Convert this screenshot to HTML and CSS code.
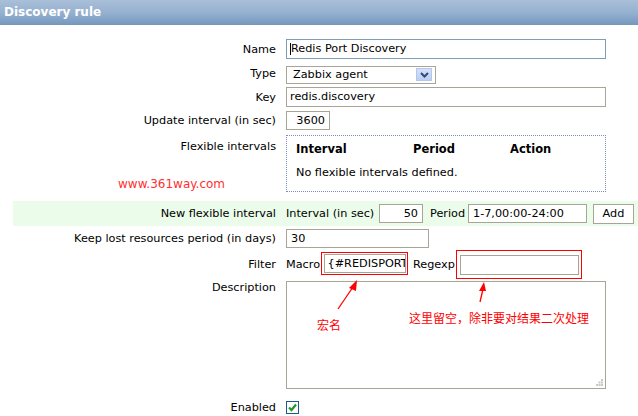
FILE: index.html
```html
<!DOCTYPE html>
<html>
<head>
<meta charset="utf-8">
<link rel="stylesheet" href="styles.css">
</head>
<body>
<div class="header">Discovery rule</div>
<div class="form">
  <div class="row r-name">
    <div class="lbl">Name</div>
    <div class="val"><div class="field f-name"><span class="caret"></span>Redis Port Discovery</div></div>
  </div>
  <div class="row r-type">
    <div class="lbl">Type</div>
    <div class="val"><div class="select"><span class="sel-text">Zabbix agent</span><span class="sel-btn"><svg width="9" height="6" viewBox="0 0 9 6"><path d="M1 1 L4.5 4.5 L8 1" fill="none" stroke="#2d4a7a" stroke-width="2"/></svg></span></div></div>
  </div>
  <div class="row r-key">
    <div class="lbl">Key</div>
    <div class="val"><div class="field f-key">redis.discovery</div></div>
  </div>
  <div class="row r-upd">
    <div class="lbl">Update interval (in sec)</div>
    <div class="val"><div class="field f-num f-upd">3600</div></div>
  </div>
  <div class="row r-flex">
    <div class="lbl lbl-top">Flexible intervals</div>
    <div class="val val-top">
      <div class="flexbox">
        <div class="flex-head"><span class="fh-int">Interval</span><span class="fh-per">Period</span><span class="fh-act">Action</span></div>
        <div class="flex-empty">No flexible intervals defined.</div>
      </div>
    </div>
  </div>
  <div class="row r-new">
    <div class="lbl">New flexible interval</div>
    <div class="val">
      <span class="nf-int">Interval (in sec)</span>
      <div class="field f-num f-nint">50</div>
      <span class="nf-per">Period</span>
      <div class="field f-per">1-7,00:00-24:00</div>
      <div class="btn">Add</div>
    </div>
  </div>
  <div class="row r-keep">
    <div class="lbl">Keep lost resources period (in days)</div>
    <div class="val"><div class="field f-keep">30</div></div>
  </div>
  <div class="row r-filter">
    <div class="lbl">Filter</div>
    <div class="val">
      <span class="fl-macro">Macro</span>
      <div class="redbox rb-macro"><div class="field f-macro">{#REDISPORT}</div></div>
      <span class="fl-regexp">Regexp</span>
      <div class="redbox rb-regexp"><div class="field f-regexp"></div></div>
    </div>
  </div>
  <div class="row r-desc">
    <div class="lbl lbl-desc">Description</div>
    <div class="val val-top"><div class="textarea"><svg class="grip" width="7" height="7" viewBox="0 0 7 7"><rect x="5" y="0" width="2" height="2" fill="#c8c8c8"/><rect x="5" y="2.5" width="2" height="2" fill="#c8c8c8"/><rect x="2.5" y="2.5" width="2" height="2" fill="#c8c8c8"/><rect x="5" y="5" width="2" height="2" fill="#c8c8c8"/><rect x="2.5" y="5" width="2" height="2" fill="#c8c8c8"/><rect x="0" y="5" width="2" height="2" fill="#c8c8c8"/></svg></div></div>
  </div>
  <div class="row r-enabled">
    <div class="lbl">Enabled</div>
    <div class="val"><div class="checkbox"><svg width="11" height="11" viewBox="0 0 11 11"><path d="M2 5.5 L4.5 8 L9 2.5" fill="none" stroke="#1f9a2a" stroke-width="2.2"/></svg></div></div>
  </div>
</div>

<div class="watermark">www.361way.com</div>
<div class="note note-macro">宏名</div>
<div class="note note-regexp">这里留空，除非要对结果二次处理</div>
<svg class="arrows" width="638" height="416" viewBox="0 0 638 416">
  <line x1="338" y1="309" x2="353" y2="287" stroke="#ff0000" stroke-width="1.3"/>
  <polygon points="357,280 349,288 356,291" fill="#ff0000"/>
  <line x1="480" y1="302" x2="483" y2="289" stroke="#ff0000" stroke-width="1.3"/>
  <polygon points="484,282 479,291 486,291" fill="#ff0000"/>
</svg>
</body>
</html>
```
FILE: styles.css
```css
html, body {
  margin: 0;
  padding: 0;
}
body {
  width: 638px;
  height: 416px;
  overflow: hidden;
  position: relative;
  background: #ffffff;
  font-family: "DejaVu Sans", Verdana, sans-serif;
  font-size: 11.25px;
  color: #000000;
}
.header {
  height: 25px;
  line-height: 24px;
  padding-left: 4px;
  color: #ffffff;
  font-weight: bold;
  font-size: 12px;
  background: linear-gradient(#aabfd8 0%, #93afcf 55%, #7497bd 100%);
}
.form {
  margin-left: 13px;
  padding-top: 12px;
}
.row {
  display: grid;
  grid-template-columns: 268px 1fr;
  align-items: center;
}
.lbl {
  text-align: right;
  padding-right: 5px;
  white-space: nowrap;
}
.val {
  padding-left: 5px;
  display: flex;
  align-items: center;
}
.val-top { align-self: start; }
.lbl-top { align-self: start; padding-top: 7px; }
.r-name { height: 24px; }
.r-type { height: 25px; }
.r-key { height: 22px; }
.r-upd { height: 25px; }
.r-flex { height: 68px; }
.r-new { height: 25px; background: #ebfcea; }
.r-keep { height: 24px; }
.r-filter { height: 26px; }
.r-desc { height: 120px; }
.r-enabled { height: 22px; }

.field {
  box-sizing: border-box;
  border: 1px solid #a9a596;
  background: #ffffff;
  height: 19px;
  line-height: 17px;
  padding: 0 4px;
  white-space: nowrap;
  overflow: hidden;
}
.f-name {
  width: 320px;
  height: 20px;
  line-height: 18px;
  border-color: #7f9db9;
  padding-left: 3px;
  display: flex;
  align-items: center;
}
.caret {
  display: inline-block;
  width: 1px;
  height: 12px;
  background: #000;
}
.f-key { width: 320px; height: 20px; line-height: 18px; padding-left: 3px; }
.f-num { text-align: right; }
.f-upd { width: 44px; }
.select {
  box-sizing: border-box;
  width: 150px;
  height: 18px;
  border: 1px solid #a9a596;
  margin-top: 2px;
  display: flex;
  align-items: center;
  justify-content: space-between;
  padding: 0 3px 0 6px;
}
.sel-btn {
  width: 16px;
  height: 13px;
  background: linear-gradient(#d6e1f9, #bccdf2);
  border: 1px solid #b5c6ec;
  box-sizing: border-box;
  display: flex;
  align-items: center;
  justify-content: center;
}
.flexbox {
  box-sizing: border-box;
  width: 320px;
  height: 57px;
  margin-top: 2px;
  border: 1px dotted #7a8cc0;
  padding: 6px 9px 0 9px;
}
.flex-head {
  display: flex;
  font-weight: bold;
  font-size: 11.5px;
  height: 16px;
}
.fh-int { width: 117px; }
.fh-per { width: 97px; }
.flex-empty { margin-top: 8px; }
.nf-int { width: 93px; white-space: nowrap; }
.f-nint { width: 44px; }
.nf-per { margin-left: 7px; width: 38px; }
.f-per { width: 119px; }
.btn {
  box-sizing: border-box;
  margin-left: 6px;
  width: 41px;
  height: 20px;
  border: 1px solid #a9a596;
  background: #ffffff;
  text-align: center;
  line-height: 18px;
}
.f-keep { width: 143px; }
.fl-macro { width: 35px; white-space: nowrap; }
.redbox {
  box-sizing: border-box;
  border: 1.5px solid #ff0000;
  display: flex;
  align-items: center;
  justify-content: center;
}
.rb-macro { width: 87px; height: 23px; margin-top: -2px; }
.f-macro { width: 82px; padding: 0 3px; }
.fl-regexp { margin-left: 5px; width: 43px; }
.rb-regexp { width: 126px; height: 29px; }
.f-regexp { width: 119px; height: 20px; }
.textarea {
  position: relative;
  box-sizing: border-box;
  width: 320px;
  height: 108px;
  margin-top: 5px;
  border: 1px solid #a9a596;
}
.grip {
  position: absolute;
  right: 2px;
  bottom: 2px;
}
.lbl-desc { align-self: start; padding-top: 5px; }
.checkbox {
  box-sizing: border-box;
  width: 13px;
  height: 13px;
  border: 1px solid #1c5a8c;
  display: flex;
  align-items: center;
  justify-content: center;
}
.watermark {
  position: absolute;
  left: 118px;
  top: 177px;
  color: #ff3030;
  font-size: 12px;
}
.note {
  position: absolute;
  color: #ff0000;
  font-family: "Noto Sans CJK SC", sans-serif;
  font-size: 12px;
  line-height: 14px;
}
.note-macro { left: 317px; top: 318px; }
.note-regexp { left: 409px; top: 311px; }
.arrows {
  position: absolute;
  left: 0;
  top: 0;
  pointer-events: none;
}
```
